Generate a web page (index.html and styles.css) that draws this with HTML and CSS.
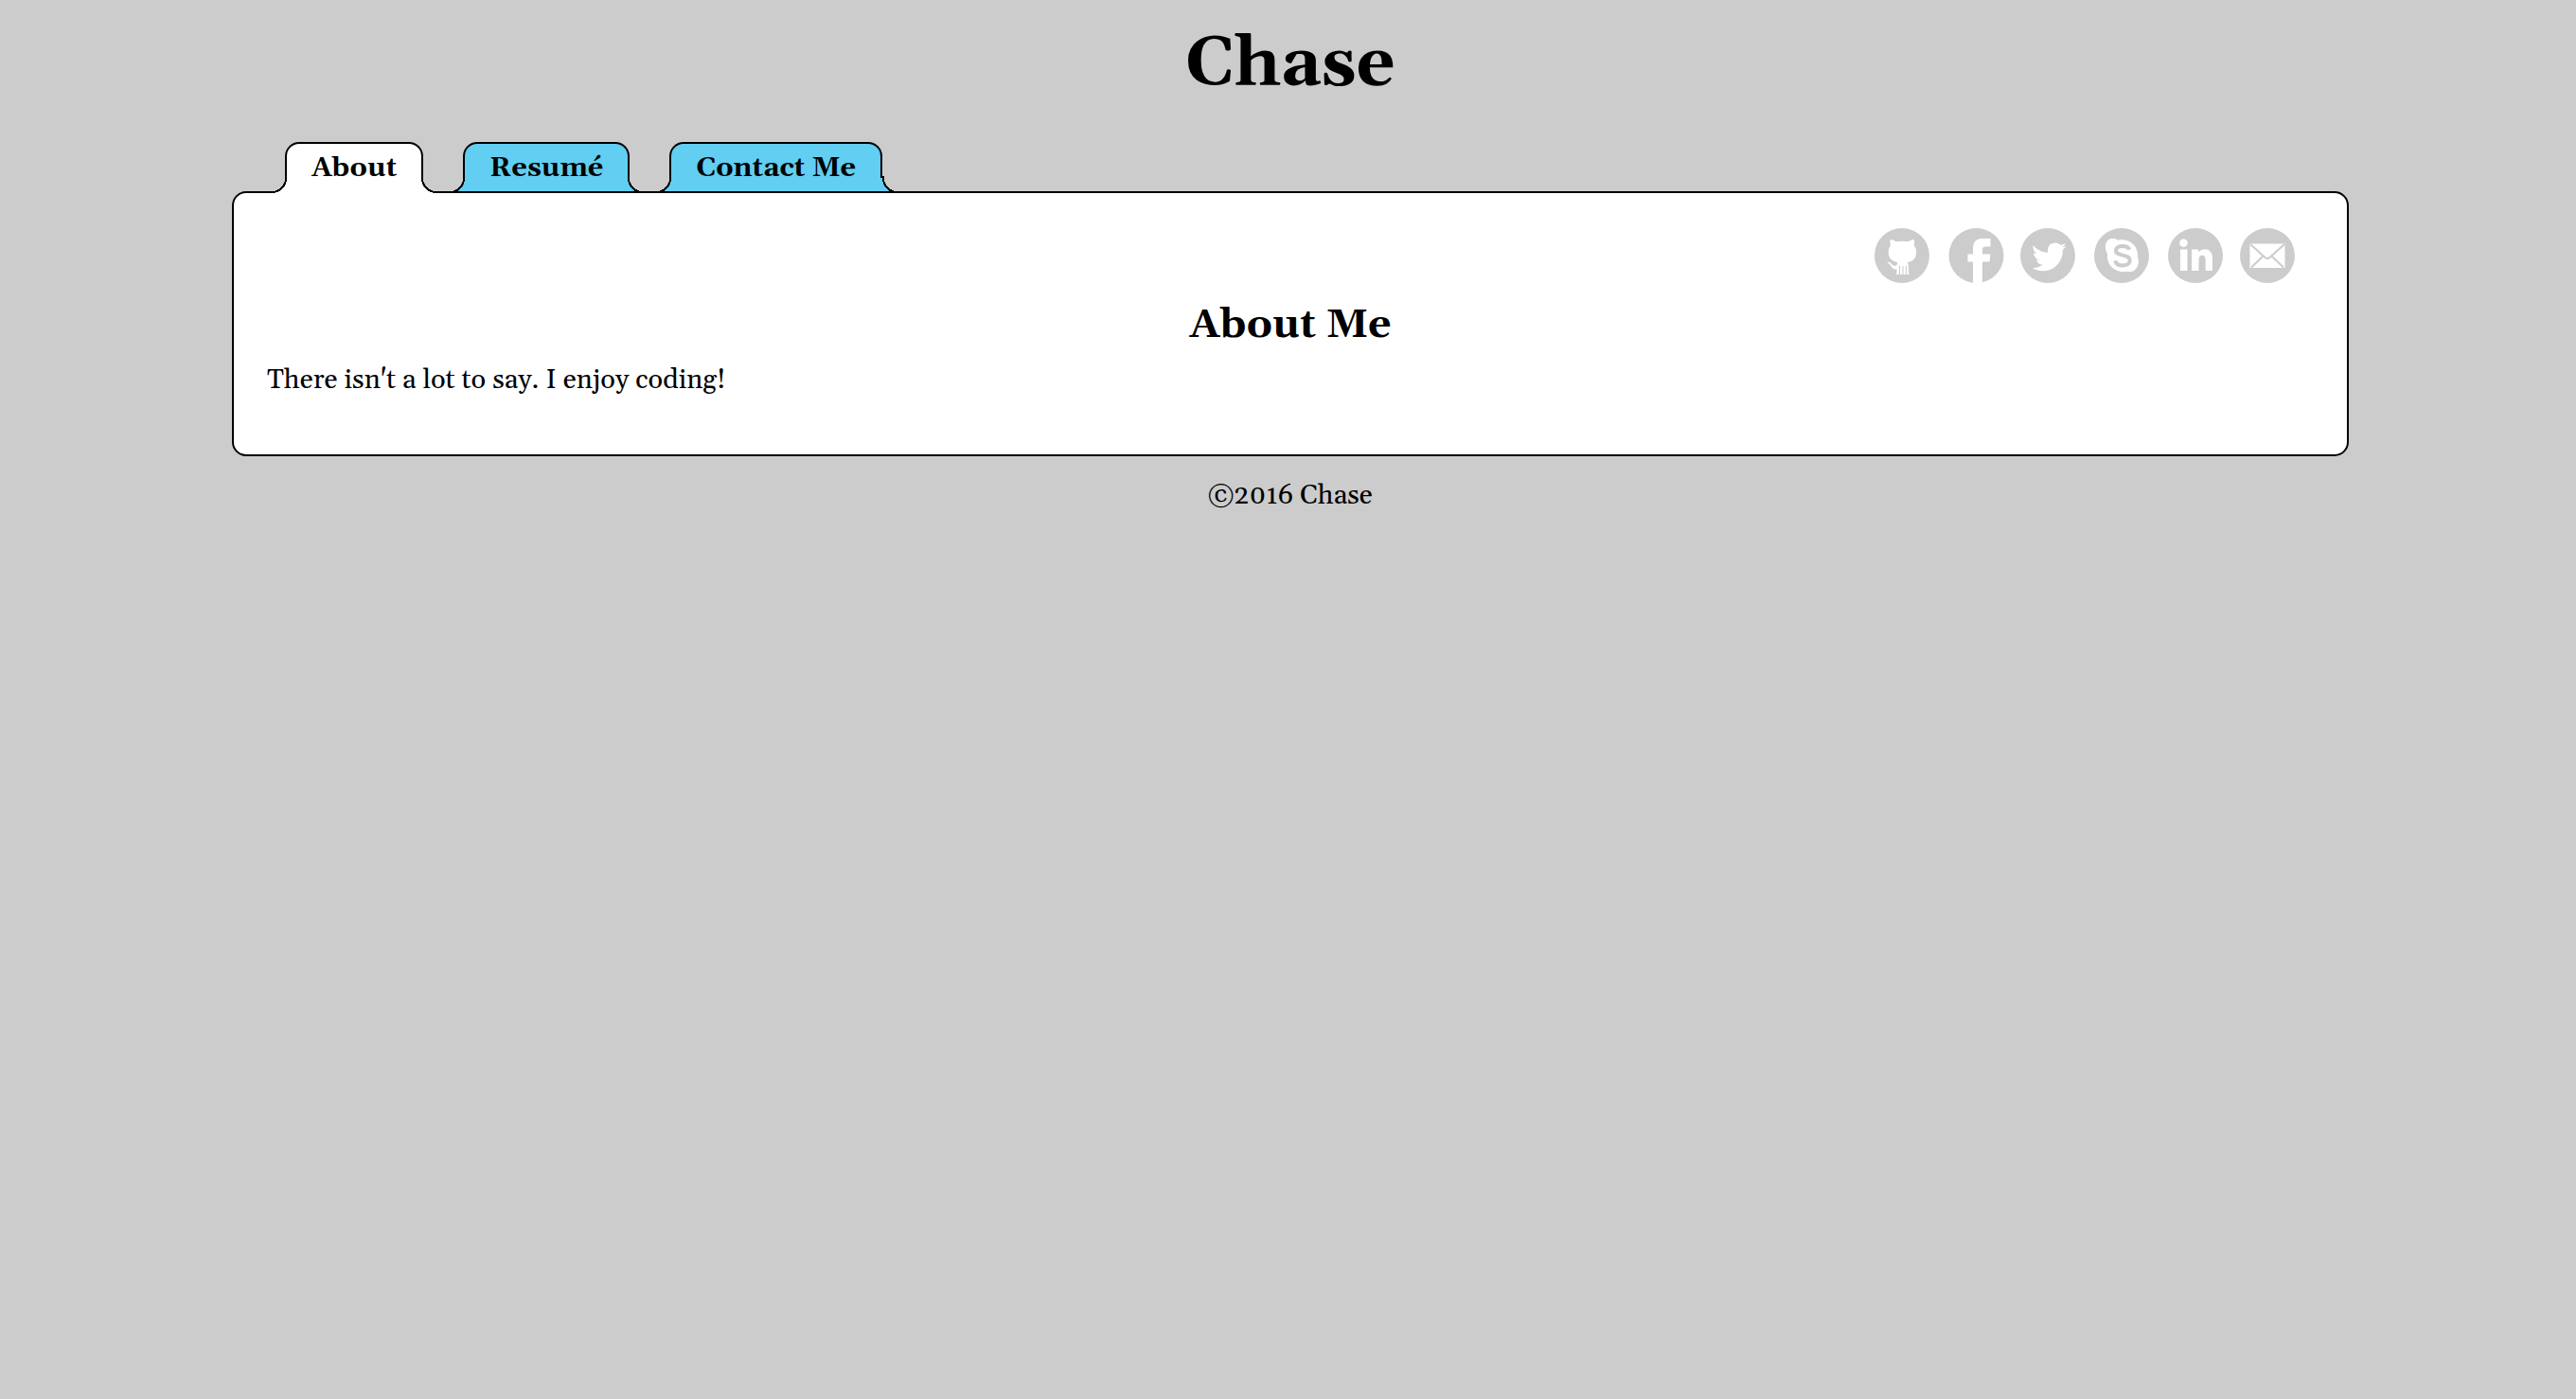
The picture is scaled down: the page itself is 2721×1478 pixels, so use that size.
FILE: index.html
```html
<!DOCTYPE html>
<html lang="en">
<head>
<meta charset="utf-8">
<title>Chase</title>
<link rel="stylesheet" href="styles.css">
</head>
<body>
<div class="page">
  <header><h1 class="site-title">Chase</h1></header>
  <nav class="tabs" aria-label="Sections">
    <a class="tab tab-active" href="#about" aria-current="page">About</a>
    <a class="tab" href="#resume">Resumé</a>
    <a class="tab tab-last" href="#contact">Contact Me</a>
  </nav>
  <main class="panel" id="about">
    <div class="social">
      <a href="#github" aria-label="GitHub"><svg class="icon" viewBox="0 0 60 58">
        <circle class="disc" cx="29" cy="29" r="29"/>
        <path class="mark" d="M16.500 12c2 0 4.500 1 6.500 2.300c4-.8 8.500-.8 12.500 0c2-1.300 4.500-2.300 6-2.300c.9 2.400.9 4.600.3 6.400c2 2.400 2.700 5 2.200 9c-.7 5.500-4.200 8-9.500 8.700c1 1 1.500 2.300 1.500 4v7c0 1 .5 1.500 1 2h-14.500c.7-.5 1-1 1-2v-3.600c-5 .6-5.500-3.500-7.500-5.300c-.8-.8-1.800-1.500-2.500-2.300c4-.6 4.500 3.700 7.300 3.900c1.200.1 2.100-.2 2.700-.6c.1-1.200.6-2.300 1.200-3.100c-5.500-.7-9.500-3.500-9.900-9c-.2-3.800.3-6.200 2.200-8.700c-.6-2-.5-4.200-.5-6.400z"/>
        <path class="cut" d="M26.500 40v9M30 40v9M33.500 40v9"/>
      </svg></a>
      <a href="#facebook" aria-label="Facebook"><svg class="icon" viewBox="0 0 60 58">
        <circle class="disc" cx="30.500" cy="29" r="29"/>
        <path class="mark" d="M27 59V35.500h-5.500v-8H27V22c0-7 3-11 10-11h8.500v8.500H40c-2.200 0-3 1-3 3v5h8.500l-1 8H37V59z"/>
      </svg></a>
      <a href="#twitter" aria-label="Twitter"><svg class="icon" viewBox="0 0 60 58">
        <circle class="disc" cx="29" cy="29" r="29"/>
        <path class="mark" d="M13.500 18c4 4.800 9.500 7.400 15.700 7.900c-1.200-6.500 2.500-10.400 7.800-10.400c2.300 0 4.300.9 5.700 2.400c1.800-.4 3.400-1 5-1.900c-.6 1.800-1.800 3.200-3.300 4.200c1.500-.2 3-.6 4.200-1.200c-1 1.500-2.300 2.800-3.800 3.900c.4 11.500-8 22.300-20.800 22.300c-4 0-8-1.200-11.200-3.300c4 .4 7.800-.7 10.900-3.100c-3.400-.1-6-2.200-6.900-5.200c1.100.2 2.200.1 3.200-.1c-3.500-.8-6-3.800-6-7.500c1 .6 2.200.9 3.400.9c-3.400-2.500-4.300-5.900-3.900-8.900z"/>
      </svg></a>
      <a href="#skype" aria-label="Skype"><svg class="icon" viewBox="0 0 60 58">
        <circle class="disc" cx="30" cy="29" r="29"/>
        <path class="mark" d="M20.500 11c2 0 4 .6 5.500 1.700c12-2.700 22.500 6.500 21 18.300c3.500 8-3.500 17.500-11.500 14.800c-12.500 2.200-22-7-20.400-18.500C10.500 19.500 13.500 11 20.500 11z"/>
        <path class="letter" d="M38.300 22.800c-1.200-2.900-4.200-3.800-7.300-3.800c-3.800 0-7 1.500-7 4.700c0 6.800 14.700 3 14.700 10.500c0 3.500-3.500 5.300-7.700 5.300c-4 0-6.700-1.500-8-5"/>
      </svg></a>
      <a href="#linkedin" aria-label="LinkedIn"><svg class="icon" viewBox="0 0 60 58">
        <circle class="disc" cx="31" cy="29" r="29"/>
        <circle class="mark" cx="18.500" cy="15.800" r="4.300"/>
        <path class="mark" d="M15 22.500h7.500V45H15zM27 22.500h7v3c3.500-5 15-5.500 15 6V45h-7.300V33c0-6-7.200-5.500-7.200 0v12H27z"/>
      </svg></a>
      <a href="#email" aria-label="Email"><svg class="icon" viewBox="0 0 60 58">
        <circle class="disc" cx="30" cy="29" r="29"/>
        <path class="mark" d="M11.500 16.500h37V42h-37z"/>
        <path class="crease" d="M12 17l15.500 14q2.500 2 5 0L48 17M13 41.500l12.500-12M47 41.500l-12.500-12"/>
      </svg></a>
    </div>
    <h2 class="heading">About Me</h2>
    <p class="text">There isn't a lot to say. I enjoy coding!</p>
  </main>
  <footer class="footer">©2016 Chase</footer>
</div>
</body>
</html>
```
FILE: styles.css
```css
* { box-sizing: border-box; }

body {
  margin: 0;
  background: #ccc;
  color: #000;
  font: 29px/36px Georgia, Gelasio, "Liberation Serif", serif;
}

.page {
  width: calc(82% + 5px);
  margin-left: 9%;
}

.site-title {
  margin: 0;
  padding: 28px 0 42px;
  font-size: 72px;
  line-height: 80px;
  text-align: center;
}

.tabs {
  display: flex;
  gap: 42px;
  margin-bottom: -2px;
  padding-left: 56px;
}

/* Tabs flow into the panel edge through a concave flare on each side. */
.tab {
  --fill: #61cef2;
  position: relative;
  height: 54px;
  padding: 8px 26px 0;
  border: 2px solid #000;
  border-bottom: 0;
  border-radius: 15px 15px 0 0;
  background: var(--fill);
  color: #000;
  font-weight: bold;
  text-decoration: none;
}

.tab::before,
.tab::after {
  content: "";
  position: absolute;
  bottom: 0;
  width: 16px;
  height: 18px;
}

.tab::before {
  right: 100%;
  background: radial-gradient(circle at 0 2px, transparent 14px, #000 14px 16px, var(--fill) 16px);
}

.tab::after {
  left: 100%;
  background: radial-gradient(circle at 100% 2px, transparent 14px, #000 14px 16px, var(--fill) 16px);
}

.tab-last::after {
  width: 18px;
  background:
    linear-gradient(#000, #000) 0 0 / 4px 2px no-repeat,
    linear-gradient(var(--fill), var(--fill)) 0 2px / 2px 16px no-repeat,
    radial-gradient(circle at 100% 2px, transparent 14px, #000 14px 16px, var(--fill) 16px);
}

.tab-active {
  --fill: #fff;
  z-index: 2;
}

.panel {
  position: relative;
  z-index: 1;
  padding: 37px 35px 60px;
  border: 2px solid #000;
  border-radius: 15px;
  background: #fff;
}

.social {
  display: flex;
  justify-content: flex-end;
  gap: 17px;
  padding-right: 19px;
}

.icon {
  display: block;
  width: 60px;
  height: 58px;
  overflow: visible;
}

.disc { fill: #ccc; }
.mark { fill: #fff; }
.cut { fill: none; stroke: #ccc; stroke-width: 1; }
.letter { fill: none; stroke: #ccc; stroke-width: 4; }
.crease { fill: none; stroke: #ccc; stroke-width: 2; }

.heading {
  margin: 18px 0 13px;
  font-size: 43px;
  line-height: 54px;
  text-align: center;
}

.text { margin: 0; }

.footer {
  margin-top: 24px;
  text-align: center;
}
```
